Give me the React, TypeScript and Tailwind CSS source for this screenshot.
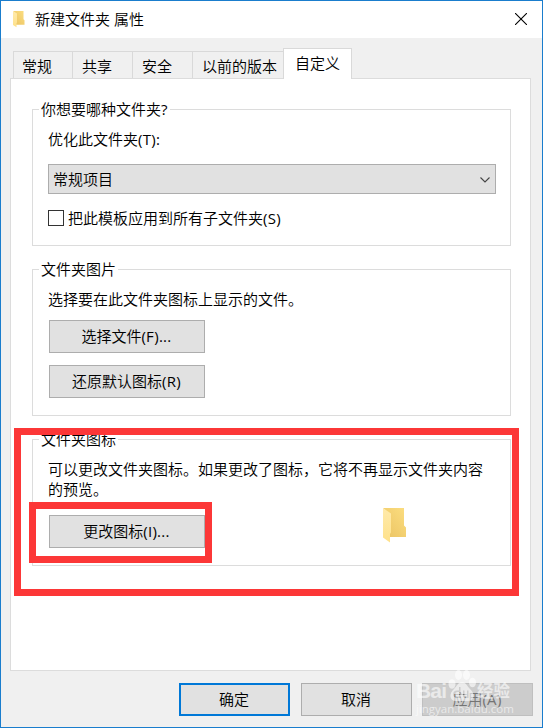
import React from 'react';
import clsx from 'clsx';

interface PropButtonProps {
  children: React.ReactNode;
  className?: string;
}

const TABS = [
  { label: '常规', width: 'w-[59px]', pad: 'pl-2' },
  { label: '共享', width: 'w-[60px]', pad: 'pl-[9px]' },
  { label: '安全', width: 'w-[60px]', pad: 'pl-[9px]' },
  { label: '以前的版本', width: 'w-[91px]', pad: 'pl-[9px]' },
];

const FolderIcon: React.FC<{ className?: string }> = ({ className }) => (
  <svg viewBox="0 0 24 36" className={className} preserveAspectRatio="none">
    <defs>
      <linearGradient id="folderBack" x1="0" y1="1" x2="1" y2="0">
        <stop offset="0.1" stopColor="#ecc565" />
        <stop offset="0.9" stopColor="#fadb7d" />
      </linearGradient>
      <linearGradient id="folderFront" x1="0" y1="0" x2="0" y2="1">
        <stop offset="0" stopColor="#ffeaab" />
        <stop offset="1" stopColor="#fee18a" />
      </linearGradient>
    </defs>
    <path d="M0 0H21V17.5L23 19.5V29H6V6Z" fill="url(#folderBack)" />
    <path d="M0 0L8 5.5V24.5L7 26V34.5L0 29.5Z" fill="url(#folderFront)" />
  </svg>
);

// Access keys and punctuation next to the Chinese labels
const Latin: React.FC<{ children: React.ReactNode }> = ({ children }) => (
  <span className="font-normal tracking-[0.3px]">{children}</span>
);

const PropButton: React.FC<PropButtonProps> = ({ children, className }) => (
  <button
    className={clsx(
      'flex h-[33px] items-center justify-center border pb-0.5 pr-px leading-5',
      className,
    )}
  >
    {children}
  </button>
);

interface GroupProps {
  title: React.ReactNode;
  className?: string;
  children: React.ReactNode;
}

const Group: React.FC<GroupProps> = ({ title, className, children }) => (
  <fieldset className={clsx('w-[479px] border border-[#dcdcdc]', className)}>
    <legend className="ml-1.5 h-[21px] px-0.5 leading-[21px]">{title}</legend>
    {children}
  </fieldset>
);

const Watermark = () => (
  <div className="pointer-events-none absolute left-[415px] top-[666px] w-[100px] text-white/60">
    <div className="flex h-[34px] items-end">
      <span className="w-[34px] font-['Liberation_Sans'] text-[21px] font-bold leading-[21px] tracking-[-0.8px]">Bai</span>
      <svg viewBox="0 0 28 34" className="-ml-0.5 h-[34px] w-7" fill="currentColor">
        <ellipse cx="4" cy="17" rx="3.5" ry="4.8" />
        <ellipse cx="10.500" cy="8" rx="3.5" ry="5" />
        <ellipse cx="18.500" cy="8" rx="3.5" ry="5" />
        <ellipse cx="24.500" cy="15.500" rx="3.5" ry="4.8" />
        <path
          fillRule="evenodd"
          d="M14 15C18 15 19 19 22 22C27 26 27 34 20 34H8C1 34 1 26 6 22C9 19 10 15 14 15ZM11 20V23.500H9A3.500 3.500 0 0 0 9 31H12.500V20ZM11 25V29.500H9.500A2 2 0 0 1 9.500 25ZM15 23.500V28.500Q15 31 17.500 31H20.500V23.500H19V29.500H17.500Q16.500 29.500 16.500 28.500V23.500Z"
        />
      </svg>
      <span className="ml-px text-[16.500px] font-bold leading-[20px]">经验</span>
    </div>
    <div className="font-['Open_Sans'] text-[11.500px] font-normal leading-4">jingyan.baidu.com</div>
  </div>
);

export default function App() {
  return (
    <div className="relative h-[728px] w-[543px] overflow-hidden border border-[#1a7dcd] bg-[#f0f0f0] font-['Open_Sans','Noto_Sans_CJK_SC',sans-serif] text-[15px] font-[350] text-black">
      <header className="flex h-[37px] items-center bg-white pl-3 pr-[15px]">
        <FolderIcon className="h-[17px] w-3" />
        <h1 className="mb-0.5 ml-2.5 flex-1 font-[350] leading-5">新建文件夹 属性</h1>
        <svg viewBox="0 0 12 12" className="mb-px size-3" fill="none" stroke="#000" strokeWidth="1.1">
          <path d="M0 0L12 12M12 0L0 12" />
        </svg>
      </header>

      <nav className="flex h-10 items-end pl-3">
        {TABS.map((tab) => (
          <div
            key={tab.label}
            className={clsx('h-[27px] border-l border-t border-[#d9d9d9] pt-1 leading-5', tab.width, tab.pad)}
          >
            {tab.label}
          </div>
        ))}
        <div className="relative z-10 -mb-px h-[31px] w-[69px] border border-b-0 border-[#d9d9d9] bg-white pl-[11px] pt-1 leading-5">
          自定义
        </div>
      </nav>

      <main className="ml-[9px] flex h-[593px] w-[521px] flex-col gap-[13px] border border-[#dcdcdc] bg-white pl-[21px] pt-5">
        <Group title={<>你想要哪种文件夹<Latin>?</Latin></>} className="h-[147px]">
          <div className="pl-[15px] pt-[9px]">
            <p className="leading-5">
              优化此文件夹<Latin>(T):</Latin>
            </p>
            <div className="mt-[15px] flex h-[30px] w-[448px] items-center justify-between border border-[#adadad] bg-[#e1e1e1] pl-1 pr-[5px]">
              <span className="leading-5">常规项目</span>
              <svg viewBox="0 0 10 6" className="mt-px h-1.5 w-2.5" fill="none" stroke="#444" strokeWidth="1.1">
                <path d="M0.500 0.500L5 5L9.500 0.500" />
              </svg>
            </div>
            <div className="mt-3.5 flex h-5 items-center">
              <span className="size-4 border border-[#333] bg-white" />
              <span className="ml-1 leading-5">
                把此模板应用到所有子文件夹<Latin>(S)</Latin>
              </span>
            </div>
          </div>
        </Group>

        <Group title="文件夹图片" className="h-[157px]">
          <div className="pl-[15px] pt-[9px]">
            <p className="leading-5">选择要在此文件夹图标上显示的文件。</p>
            <div className="ml-px mt-[11px] flex w-[156px] flex-col gap-3">
              <PropButton className="border-[#adadad] bg-[#e1e1e1]">
                选择文件<Latin>(F)...</Latin>
              </PropButton>
              <PropButton className="border-[#adadad] bg-[#e1e1e1]">
                还原默认图标<Latin>(R)</Latin>
              </PropButton>
            </div>
          </div>
        </Group>

        <Group title="文件夹图标" className="h-[137px]">
          <div className="pl-[15px] pt-[9px]">
            <p className="w-[440px] leading-5">
              可以更改文件夹图标。如果更改了图标，它将不再显示文件夹内容的预览。
            </p>
            <div className="ml-px mt-[9px] flex items-start">
              <PropButton className="mt-[7px] w-[156px] border-[#adadad] bg-[#e1e1e1]">
                更改图标<Latin>(I)...</Latin>
              </PropButton>
              <FolderIcon className="ml-[178px] h-9 w-6" />
            </div>
          </div>
        </Group>
      </main>

      <footer className="flex gap-[11px] pl-[178px] pt-3">
        <PropButton className="w-[111px] border-2 border-[#0078d7] bg-[#e1e1e1]">确定</PropButton>
        <PropButton className="w-[111px] border-[#adadad] bg-[#e1e1e1]">取消</PropButton>
        <PropButton className="-ml-px w-[111px] border-[#bfbfbf] bg-[#cccccc] text-[#747474]">
          应用<Latin>(A)</Latin>
        </PropButton>
      </footer>

      {/* Highlight frames over the icon section */}
      <div className="absolute left-[13px] top-[427px] z-20 h-[168px] w-[505px] border-[7px] border-[#fc3737]" />
      <div className="absolute left-7 top-[501px] z-20 h-[61px] w-[183px] border-[7px] border-[#fc3737]" />
      <Watermark />
    </div>
  );
}
